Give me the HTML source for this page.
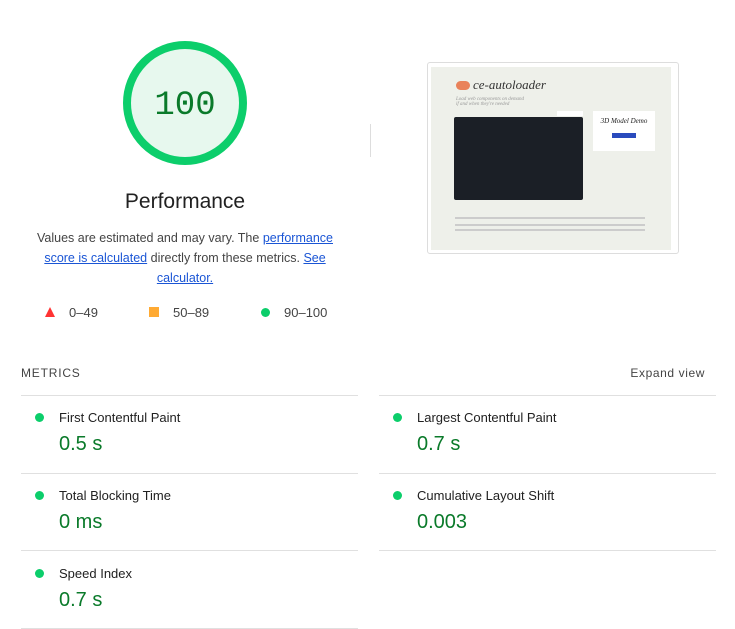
<!DOCTYPE html>
<html><head><style>
body{margin:0;width:735px;height:629px;background:#fff;font-family:"Liberation Sans",sans-serif;color:#212121;position:relative;overflow:hidden}
.a{position:absolute}
a{color:#1a55d5;text-decoration:underline}
.lbl{font-size:13px;color:#212121}
.val{font-size:20px;color:#0a7a2a}
.dot{width:9px;height:9px;border-radius:50%;background:#0cce6b}
.hr{height:1px;background:#e0e0e0}
</style></head><body>
<svg class="a" style="left:122px;top:40px" width="126" height="126">
<circle cx="63" cy="63" r="58" fill="#e7f8ee" stroke="#0cce6b" stroke-width="8"/>
<text x="63" y="74" text-anchor="middle" font-family="Liberation Mono,monospace" font-size="34" fill="#0a7a2a">100</text>
</svg>
<div class="a" style="left:0;width:370px;top:190px;text-align:center;font-size:21px">Performance</div>
<div class="a" style="left:28px;width:314px;top:228px;text-align:center;font-size:12.5px;line-height:20px;color:#444">Values are estimated and may vary. The <a>performance score is calculated</a> directly from these metrics. <a>See calculator.</a></div>
<svg class="a" style="left:44px;top:306px" width="12" height="12"><polygon points="6,1 11,11 1,11" fill="#f33"/></svg>
<div class="a lbl" style="left:69px;top:305px;color:#444">0–49</div>
<div class="a" style="left:149px;top:307px;width:10px;height:10px;background:#fa3"></div>
<div class="a lbl" style="left:173px;top:305px;color:#444">50–89</div>
<div class="a dot" style="left:261px;top:308px"></div>
<div class="a lbl" style="left:284px;top:305px;color:#444">90–100</div>
<div class="a" style="left:370px;top:124px;width:1px;height:33px;background:#ddd"></div>
<div class="a" style="left:427px;top:62px;width:250px;height:190px;border:1px solid #ddd;border-radius:3px;background:#fff">
 <div class="a" style="left:3px;top:4px;width:240px;height:183px;background:#eef0ea;overflow:hidden">
  <div class="a" style="left:25px;top:14px;width:14px;height:9px;background:#e9825a;border-radius:5px"></div>
  <div class="a" style="left:42px;top:10px;font-family:'Liberation Serif',serif;font-style:italic;font-size:13px;color:#333">ce-autoloader</div>
  <div class="a" style="left:25px;top:30px;font-family:'Liberation Serif';font-style:italic;font-size:5px;color:#999">Load web components on demand<br>if and when they're needed</div>
  <div class="a" style="left:23px;top:50px;width:129px;height:83px;background:#1b1f26;border-radius:2px"></div>
  <div class="a" style="left:126px;top:44px;width:26px;height:5px;background:#fff"></div>
  <div class="a" style="left:162px;top:44px;width:62px;height:40px;background:#fff;text-align:center;font-family:'Liberation Serif';font-style:italic;font-size:7px;padding-top:6px;box-sizing:border-box">3D Model Demo<div style="margin:8px auto 0;width:24px;height:5px;background:#2a4bbd"></div></div>
  <div class="a" style="left:24px;top:150px;width:190px;height:2px;background:#ccc"></div>
  <div class="a" style="left:24px;top:157px;width:190px;height:2px;background:#ccc"></div>
  <div class="a" style="left:24px;top:162px;width:190px;height:2px;background:#ccc"></div>
  <div class="a" style="left:240px;top:2px;width:2px;height:30px;background:#999"></div>
 </div>
</div>
<div class="a" style="left:21px;top:366px;font-size:12px;letter-spacing:.8px;color:#444">METRICS</div>
<div class="a" style="right:30px;top:366px;font-size:12px;letter-spacing:.6px;color:#444">Expand view</div>
<div class="a hr" style="left:21px;top:395px;width:337px"></div>
<div class="a hr" style="left:379px;top:395px;width:337px"></div>
<div class="a hr" style="left:21px;top:473px;width:337px"></div>
<div class="a hr" style="left:379px;top:473px;width:337px"></div>
<div class="a hr" style="left:21px;top:550px;width:337px"></div>
<div class="a hr" style="left:379px;top:550px;width:337px"></div>
<div class="a hr" style="left:21px;top:628px;width:337px"></div>

<div class="a dot" style="left:35px;top:413px"></div><div class="a lbl" style="left:59px;top:410px">First Contentful Paint</div><div class="a val" style="left:59px;top:433px">0.5 s</div>
<div class="a dot" style="left:393px;top:413px"></div><div class="a lbl" style="left:417px;top:410px">Largest Contentful Paint</div><div class="a val" style="left:417px;top:433px">0.7 s</div>
<div class="a dot" style="left:35px;top:491px"></div><div class="a lbl" style="left:59px;top:488px">Total Blocking Time</div><div class="a val" style="left:59px;top:511px">0 ms</div>
<div class="a dot" style="left:393px;top:491px"></div><div class="a lbl" style="left:417px;top:488px">Cumulative Layout Shift</div><div class="a val" style="left:417px;top:511px">0.003</div>
<div class="a dot" style="left:35px;top:569px"></div><div class="a lbl" style="left:59px;top:566px">Speed Index</div><div class="a val" style="left:59px;top:589px">0.7 s</div>
</body></html>
